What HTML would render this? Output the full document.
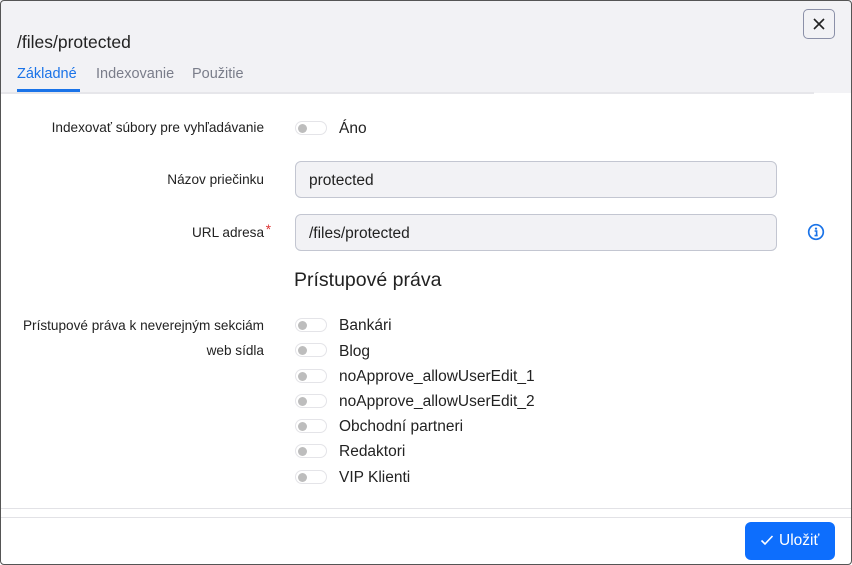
<!DOCTYPE html>
<html><head><meta charset="utf-8"><style>
*{box-sizing:border-box;margin:0;padding:0}
body{width:852px;height:565px;background:#fff;font-family:"Liberation Sans",sans-serif;position:relative;overflow:hidden;color:#1a1a1a}
.frame{position:absolute;left:0;top:0;width:852px;height:565px;border:1px solid #555;border-radius:4px;z-index:5;pointer-events:none}
.hdr{position:absolute;left:0;top:0;width:852px;height:93px;background:#f2f2f5}
.hline{position:absolute;left:0;top:92px;width:814px;height:2px;background:#e6e6ea}
.abs{position:absolute;white-space:nowrap}
.lbl{position:absolute;right:588px;font-size:13.6px;color:#222;text-align:right;white-space:nowrap;margin-top:1px}
.tg{position:absolute;left:295px;width:32px;height:14px;border:1px solid #e4e4e8;border-radius:7px;background:#fff}
.tg:after{content:"";position:absolute;left:2px;top:2px;width:9px;height:9px;border-radius:50%;background:#bdbdbd}
.opt{position:absolute;left:339px;font-size:15.5px;color:#222;white-space:nowrap;margin-top:2px}
.inp{position:absolute;left:295px;width:482px;height:37px;background:#f2f2f5;border:1px solid #c3c6d1;border-radius:6px;font-size:15.5px;padding:10px 13px 0;color:#222}
</style></head><body>
<div class="frame"></div>
<div class="hdr"></div>
<div class="hline"></div>
<div class="abs" style="left:17px;top:32px;font-size:17.5px;color:#222">/files/protected</div>
<div class="abs" style="left:17px;top:66px;font-size:14.5px;color:#1a73e8">Základné</div>
<div class="abs" style="left:17px;top:89px;width:63px;height:3px;background:#1a73e8"></div>
<div class="abs" style="left:96px;top:66px;font-size:14.5px;color:#7a7d8a">Indexovanie</div>
<div class="abs" style="left:192px;top:66px;font-size:14.5px;color:#7a7d8a">Použitie</div>
<div class="abs" style="left:803px;top:9px;width:32px;height:30px;border:1px solid #8b90a8;border-radius:5px"><svg width="30" height="28" viewBox="0 0 30 28"><path d="M10 9l10 10M20 9L10 19" stroke="#222" stroke-width="1.6"/></svg></div>

<div class="lbl" style="top:119px">Indexovať súbory pre vyhľadávanie</div>
<div class="tg" style="top:121px"></div>
<div class="opt" style="top:118px">Áno</div>

<div class="lbl" style="top:171px">Názov priečinku</div>
<div class="inp" style="top:161px">protected</div>
<div class="lbl" style="top:224px">URL adresa<span style="color:#d33;position:absolute;right:-7px;top:-3px">*</span></div>
<div class="inp" style="top:214px">/files/protected</div>
<svg class="abs" style="left:807px;top:223px" width="18" height="18" viewBox="0 0 18 18"><circle cx="9" cy="9" r="7.3" fill="none" stroke="#1a73e8" stroke-width="1.7"/><circle cx="9" cy="5.6" r="1.1" fill="#1a73e8"/><path d="M7.6 8h2v4.5M7.5 12.6h3.2" stroke="#1a73e8" stroke-width="1.6" fill="none"/></svg>

<div class="abs" style="left:294px;top:269px;font-size:19.5px;color:#222">Prístupové práva</div>
<div class="lbl" style="top:317px">Prístupové práva k neverejným sekciám</div>
<div class="lbl" style="top:342px">web sídla</div>

<div class="tg" style="top:318px"></div><div class="opt" style="top:315px">Bankári</div>
<div class="tg" style="top:343px"></div><div class="opt" style="top:341px">Blog</div>
<div class="tg" style="top:369px"></div><div class="opt" style="top:366px">noApprove_allowUserEdit_1</div>
<div class="tg" style="top:394px"></div><div class="opt" style="top:391px">noApprove_allowUserEdit_2</div>
<div class="tg" style="top:419px"></div><div class="opt" style="top:416px">Obchodní partneri</div>
<div class="tg" style="top:444px"></div><div class="opt" style="top:441px">Redaktori</div>
<div class="tg" style="top:470px"></div><div class="opt" style="top:467px">VIP Klienti</div>

<div class="abs" style="left:0;top:508px;width:852px;height:1px;background:#e2e2e6"></div>
<div class="abs" style="left:0;top:517px;width:852px;height:1px;background:#e2e2e6"></div>
<div class="abs" style="left:745px;top:522px;width:90px;height:38px;background:#0d6efd;border-radius:6px;color:#fff;font-size:15.5px;line-height:38px;padding-left:15px"><svg width="14" height="12" viewBox="0 0 14 12" style="vertical-align:-1px;margin-right:5px"><path d="M1.5 6.5l3.5 3.5 7.5-8" stroke="#fff" stroke-width="1.6" fill="none"/></svg>Uložiť</div>
</body></html>
